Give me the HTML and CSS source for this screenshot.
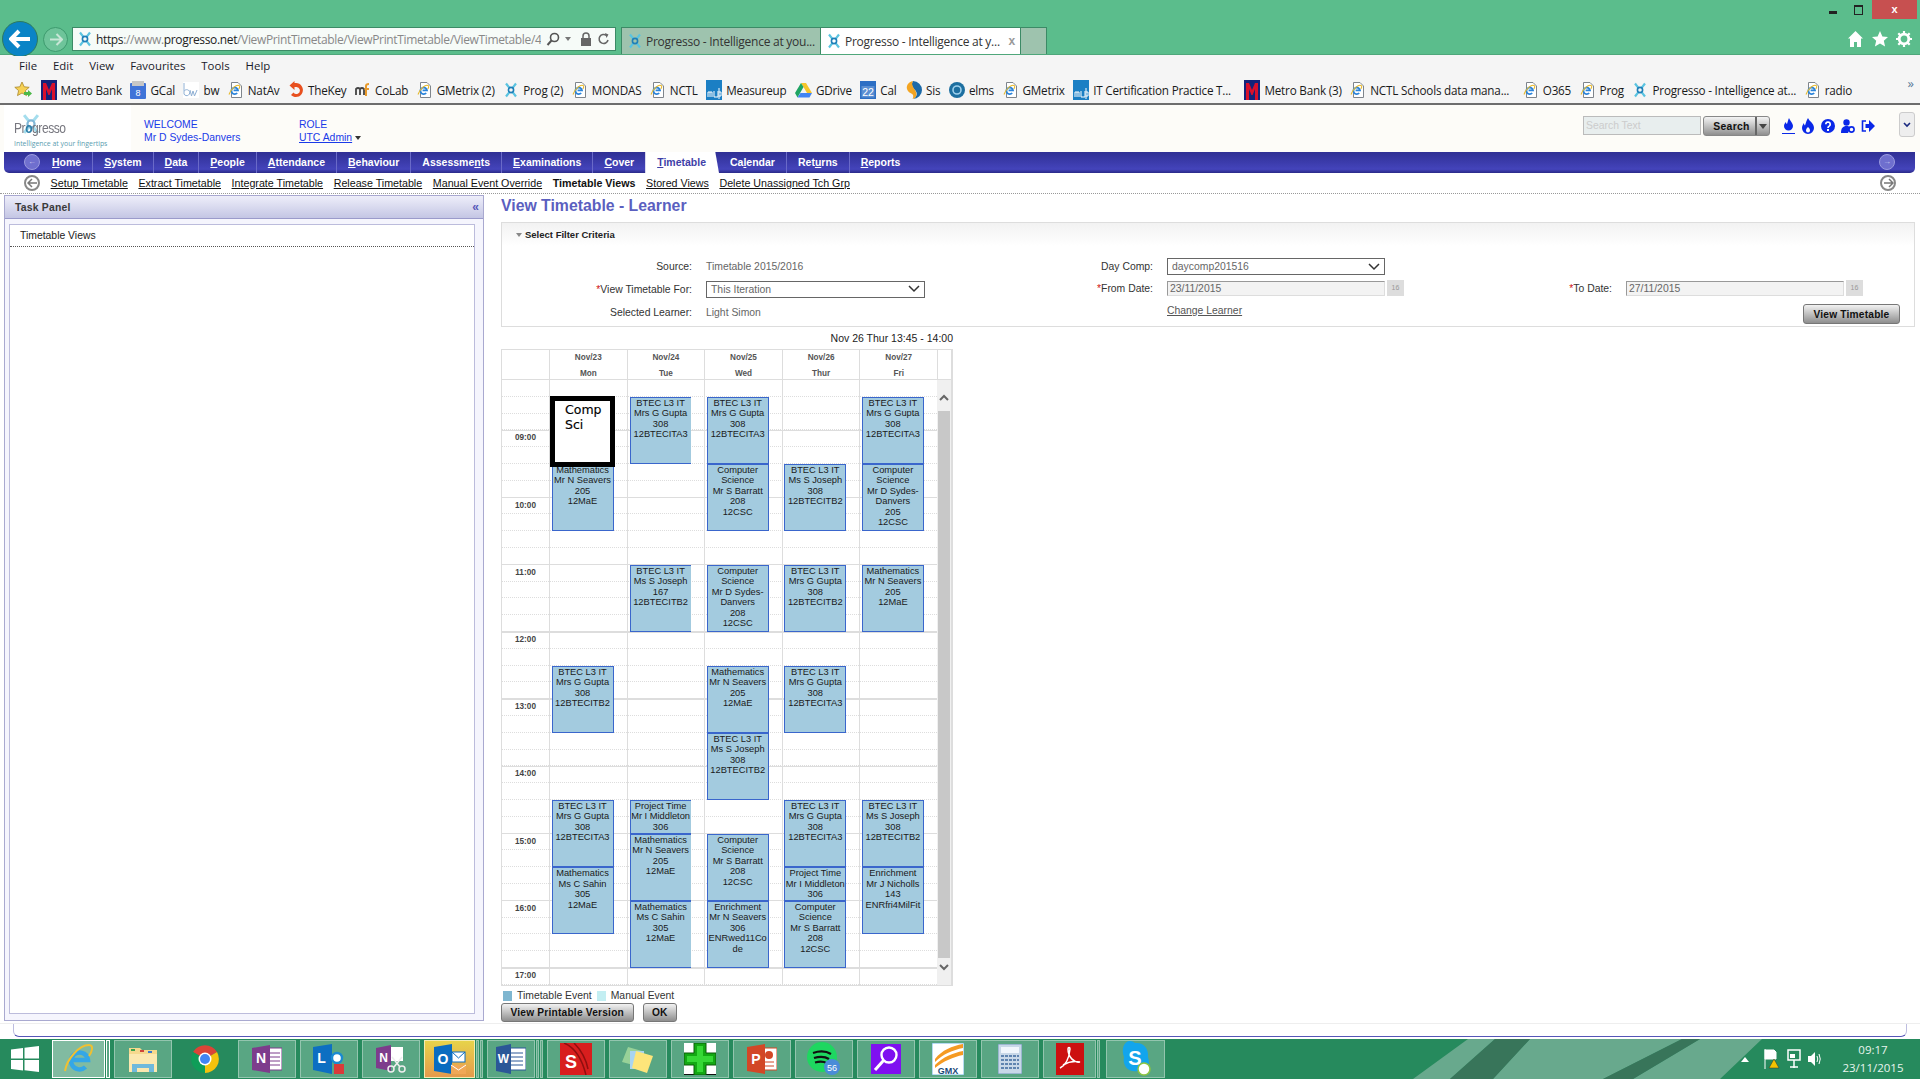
FILE: index.html
```html
<!DOCTYPE html>
<html lang="en">
<head>
  <meta charset="UTF-8" />
  <title>Progresso - Intelligence at your fingertips</title>
  <link rel="stylesheet" href="styles.css">
</head>
<body>

  <svg class="defs" width="0" height="0">
    <symbol id="prog" viewBox="0 0 16 16">
      <path d="M3 1.5l3.6 4.6M13 1.5L9.4 6.1M3 14.5l3.6-4.6M13 14.5L9.4 9.9" stroke="#5ac3e0" stroke-width="2.2" fill="none"/>
      <circle cx="8" cy="8" r="2.6" fill="none" stroke="#1f7fb8" stroke-width="1.6"/>
    </symbol>
    <symbol id="iedoc" viewBox="0 0 16 16">
      <path d="M3.5.5h6.5l3.5 3.5v11.5h-10z" fill="#fff" stroke="#7f858c"/>
      <path d="M8 9h4.4a3.3 3.3 0 1 0-.8 2.6" transform="translate(-2.4 -.6)" fill="none" stroke="#2b84da" stroke-width="1.8"/>
      <path d="M1 12.5C3.5 6 8.5 2.5 11 3.5c1.2.5.8 2-.2 3.5" fill="none" stroke="#e8b92c" stroke-width="1.1"/>
    </symbol>
    <symbol id="metro" viewBox="0 0 16 20">
      <rect width="16" height="20" fill="#14237a"/>
      <path d="M2 20V3h3l3 7 3-7h3v17h-3V9l-2.4 6H7.4L5 9v11z" fill="#d8102c"/>
    </symbol>
    <symbol id="mup" viewBox="0 0 16 20">
      <rect width="16" height="20" fill="#1b7fc4"/>
      <path d="M2 17v-5h4v5M4 12v5M8 11v6h4v-6M13 8v11M13 12h2v4h-2" stroke="#fff" stroke-width="1" fill="none"/>
    </symbol>
  </svg>

  <div class="titlebar">
    <div class="win-controls">
      <span class="win-min"></span>
      <span class="win-restore"></span>
      <span class="win-close">x</span>
    </div>
  </div>

  <div class="addressrow">
    <div class="back-btn">
      <svg width="22" height="20" viewBox="0 0 22 20"><path d="M10 2L2 10l8 8M3 10h18" stroke="#fff" stroke-width="4" fill="none"/></svg>
    </div>
    <div class="forward-btn">
      <svg width="14" height="13" viewBox="0 0 14 13"><path d="M7.5 1l5.5 5.500-5.500 5.500M12 6.500H1" stroke="#c8e6d6" stroke-width="2" fill="none"/></svg>
    </div>
    <div class="address">
      <svg class="fav-ic" width="16" height="16"><use href="#prog"/></svg>
      <span class="url"><b>https</b>://www.<b>progresso.net</b>/ViewPrintTimetable/ViewPrintTimetable/ViewTimetable/4</span>
      <svg class="addr-ic" width="14" height="14" viewBox="0 0 14 14"><circle cx="8.5" cy="5.5" r="4" fill="none" stroke="#555" stroke-width="1.6"/><path d="M5.5 8.5L1.5 13" stroke="#555" stroke-width="2"/></svg>
      <span class="addr-caret"></span>
      <svg class="addr-ic" width="12" height="14" viewBox="0 0 12 14"><rect x="1" y="6" width="10" height="8" fill="#666"/><path d="M3 6V4a3 3 0 0 1 6 0v2" fill="none" stroke="#666" stroke-width="1.5"/></svg>
      <svg class="addr-ic" width="13" height="14" viewBox="0 0 13 14"><path d="M11 8a4.5 4.5 0 1 1-1.500-4.500" fill="none" stroke="#666" stroke-width="1.6"/><path d="M8 1l3.5 1.5L9.5 6z" fill="#666"/></svg>
    </div>
    <div class="tab tab-off"><svg class="fav-ic" width="16" height="16"><use href="#prog"/></svg><span>Progresso - Intelligence at you...</span></div>
    <div class="tab tab-on"><svg class="fav-ic" width="16" height="16"><use href="#prog"/></svg><span>Progresso - Intelligence at y...</span><i>x</i></div>
    <div class="tab-new"></div>
    <div class="chrome-right">
      <svg width="15" height="16" viewBox="0 0 15 16"><path d="M7.5 0L0 7.5h2V16h4v-5h3v5h4V7.5h2z" fill="#fff"/></svg>
      <svg width="16" height="16" viewBox="0 0 16 16"><path d="M8 0l2.4 5.4 5.6.5-4.200 3.800 1.300 5.800L8 12.500 2.900 15.500l1.300-5.800L0 5.900l5.600-.5z" fill="#fff"/></svg>
      <svg width="16" height="16" viewBox="0 0 16 16"><circle cx="8" cy="8" r="4.8" fill="none" stroke="#fff" stroke-width="2.8"/><path d="M8 0v3M8 13v3M0 8h3M13 8h3M2.3 2.3l2.100 2.100M11.600 11.600l2.100 2.100M2.300 13.700l2.100-2.100M11.600 4.400l2.100-2.100" stroke="#fff" stroke-width="2.2"/></svg>
    </div>
  </div>

  <div class="menubar">
    <span>File</span><span>Edit</span><span>View</span><span>Favourites</span><span>Tools</span><span>Help</span>
  </div>

  <div class="favbar">
    <svg class="fav-star" width="18" height="17" viewBox="0 0 18 17"><path d="M8 1l2.200 4.800 5 .5-3.800 3.300 1.100 5-4.500-2.600-4.500 2.600 1.100-5L.8 6.300l5-.5z" fill="#f6d155" stroke="#a8862a" stroke-width=".8"/><path d="M10 11h4V9l4 3.500-4 3.500v-2h-4z" fill="#4cb848"/></svg>
    <a class="fav"><svg width="16" height="20"><use href="#metro"/></svg>Metro Bank</a>
    <a class="fav"><svg width="16" height="18" viewBox="0 0 16 18"><rect y="2" width="16" height="16" rx="1" fill="#3f73d8"/><rect x="2" width="12" height="5" fill="#c6c6c6"/><text x="8" y="14.500" font-size="9" fill="#fff" text-anchor="middle" font-family="Liberation Sans">8</text></svg>GCal</a>
    <a class="fav"><svg width="16" height="16" viewBox="0 0 16 16"><rect width="16" height="16" fill="#fff"/><path d="M1 1v11a3 3 0 1 0 .2-3M7 8l1.500 6 1.500-5 1.500 5L14 8" stroke="#8fb0d4" fill="none"/></svg>bw</a>
    <a class="fav"><svg width="16" height="16"><use href="#iedoc"/></svg>NatAv</a>
    <a class="fav"><svg width="16" height="18" viewBox="0 0 16 18"><path d="M8 2a7 7 0 1 1-5 12l2.500-2.500A3.500 3.500 0 1 0 8 6H6.500V9L1.500 4.500 6.500 0v2z" fill="#e8501f"/></svg>TheKey</a>
    <a class="fav"><svg width="16" height="16" viewBox="0 0 16 16"><path d="M1 13V7q2-2 4 0v6M5 7q2-2 4 0v6" fill="none" stroke="#444" stroke-width="1.800"/><path d="M11 14V4q0-2 3-2M9.500 7H14" fill="none" stroke="#e89a2c" stroke-width="2"/></svg>CoLab</a>
    <a class="fav"><svg width="16" height="16"><use href="#iedoc"/></svg>GMetrix (2)</a>
    <a class="fav"><svg width="16" height="18"><use href="#prog"/></svg>Prog (2)</a>
    <a class="fav"><svg width="16" height="16"><use href="#iedoc"/></svg>MONDAS</a>
    <a class="fav"><svg width="16" height="16"><use href="#iedoc"/></svg>NCTL</a>
    <a class="fav"><svg width="16" height="20"><use href="#mup"/></svg>Measureup</a>
    <a class="fav"><svg width="17" height="16" viewBox="0 0 17 16"><path d="M6 1h5l6 10h-5z" fill="#f7c52a"/><path d="M6 1L0 11l2.500 4.500L8.500 5z" fill="#1fa463"/><path d="M5.500 11H17l-2.500 4.500h-12z" fill="#4285f4"/></svg>GDrive</a>
    <a class="fav"><svg width="16" height="18" viewBox="0 0 16 18"><rect width="16" height="18" fill="#2d6fc4"/><rect x="1.500" y="5" width="13" height="11.500" fill="#e8f0fa" opacity=".25"/><text x="8" y="15" font-size="10.500" fill="#fff" text-anchor="middle" font-family="Liberation Sans">22</text></svg>Cal</a>
    <a class="fav"><svg width="17" height="18" viewBox="0 0 17 18"><path d="M8 0a9 9 0 0 1 0 18c4-2 5-6 2-9S6 3 8 0z" fill="#1d6aa8"/><path d="M8 0C3 1 1 5 2 8c1 4 5 4 6 6 .6 1.500 0 3-.5 4 5-1.500 4.500-6 2.500-9S6 3 8 0z" fill="#f4a522"/></svg>Sis</a>
    <a class="fav"><svg width="16" height="16" viewBox="0 0 16 16"><circle cx="8" cy="8" r="8" fill="#1d6fa0"/><circle cx="8" cy="8" r="4" fill="none" stroke="#9ed0ec" stroke-width="1.600"/></svg>elms</a>
    <a class="fav"><svg width="16" height="16"><use href="#iedoc"/></svg>GMetrix</a>
    <a class="fav"><svg width="16" height="20"><use href="#mup"/></svg>IT Certification Practice T...</a>
    <a class="fav fav-wide"><svg width="16" height="20"><use href="#metro"/></svg>Metro Bank (3)</a>
    <a class="fav"><svg width="16" height="16"><use href="#iedoc"/></svg>NCTL Schools data mana...</a>
    <a class="fav fav-wide"><svg width="16" height="16"><use href="#iedoc"/></svg>O365</a>
    <a class="fav"><svg width="16" height="16"><use href="#iedoc"/></svg>Prog</a>
    <a class="fav"><svg width="16" height="18"><use href="#prog"/></svg>Progresso - Intelligence at...</a>
    <a class="fav"><svg width="16" height="16"><use href="#iedoc"/></svg>radio</a>
    <span class="fav-more">»</span>
  </div>

  <div class="page-header">
    <div class="logo">
      <svg class="logo-star" width="22" height="26"><use href="#prog"/></svg>
      <div class="logo-name">Pr<span class="logo-hub">o</span>gresso</div>
      <div class="logo-tag">Intelligence at your fingertips</div>
    </div>
    <div class="welcome">WELCOME<br>Mr D Sydes-Danvers</div>
    <div class="role">ROLE<br><u>UTC Admin</u><span class="role-caret"></span></div>
    <div class="header-tools">
      <input class="search-input" type="text" placeholder="Search Text" />
      <div class="search-btn"><span>Search</span><i></i></div>
      <div class="tool-icons">
        <svg width="13" height="16" viewBox="0 0 13 16"><path d="M7 0c1 3 4 5 4 8a4.500 4.500 0 0 1-9 0c0-2 1-3 2-4 0 1 .5 2 1 2 .8-2 1-4 2-6z" fill="#0a28e8"/><path d="M0 15.500h13" stroke="#0a28e8"/></svg>
        <svg width="14" height="16" viewBox="0 0 14 16"><path d="M7 0c1 3 6 5 6 10a6 6 0 0 1-12 0c0-2 1-4 2-5 0 1 .3 2 1 2.500C5 5 5.500 2 7 0zm0 9c-1 1-2 2-2 3.500a2 2 0 0 0 4 0C9 11 8 10 7 9z" fill="#0a28e8"/></svg>
        <svg width="14" height="14" viewBox="0 0 14 14"><circle cx="7" cy="7" r="7" fill="#0a28e8"/><path d="M4.800 5.200a2.200 2.200 0 1 1 3.400 1.900c-.8.500-1.200 1-1.200 1.800" fill="none" stroke="#fff" stroke-width="1.700"/><rect x="6" y="10" width="2" height="2" fill="#fff"/></svg>
        <svg width="14" height="14" viewBox="0 0 14 14"><circle cx="5.500" cy="3.500" r="3.200" fill="#0a28e8"/><path d="M0 14c0-5 2-7 5.500-7 2 0 3 .5 4 1.500L7 14z" fill="#0a28e8"/><circle cx="10.500" cy="10.500" r="2.600" fill="none" stroke="#0a28e8" stroke-width="1.600"/></svg>
        <svg width="14" height="12" viewBox="0 0 14 12"><path d="M5 1H1.500v10H5" fill="none" stroke="#0a28e8" stroke-width="1.600"/><path d="M4.500 4H8V0l6 6-6 6V8H4.500z" fill="#0a28e8"/></svg>
      </div>
      <div class="collapse-btn"><svg width="8" height="6" viewBox="0 0 8 6"><path d="M1 1l3 3 3-3" stroke="#1a2a80" stroke-width="1.600" fill="none"/></svg></div>
    </div>
  </div>

  <div class="nav">
    <span class="nav-round"><em>←</em></span>
    <a><u>H</u>ome</a><a><u>S</u>ystem</a><a><u>D</u>ata</a><a><u>P</u>eople</a><a><u>A</u>ttendance</a><a><u>B</u>ehaviour</a><a>Assessme<u>n</u>ts</a><a><u>E</u>xaminations</a><a><u>C</u>over</a><a class="nav-on"><u>T</u>imetable</a><a>Ca<u>l</u>endar</a><a>Ret<u>u</u>rns</a><a><u>R</u>eports</a>
    <span class="nav-round nav-round-right"><em>→</em></span>
  </div>

  <div class="subnav">
    <span class="sub-round">
      <svg width="11" height="10" viewBox="0 0 11 10"><path d="M5 1L1 5l4 4M1.500 5H10" stroke="#777" stroke-width="1.500" fill="none"/></svg>
    </span>
    <a>Setup Timetable</a><a>Extract Timetable</a><a>Integrate Timetable</a><a>Release Timetable</a><a>Manual Event Override</a><a class="sub-on">Timetable Views</a><a>Stored Views</a><a>Delete Unassigned Tch Grp</a>
    <span class="sub-round sub-round-right">
      <svg width="11" height="10" viewBox="0 0 11 10"><path d="M6 1l4 4-4 4M9.500 5H1" stroke="#777" stroke-width="1.500" fill="none"/></svg>
    </span>
  </div>

  <div class="content">
    <div class="task-panel">
      <div class="task-title"><span>Task Panel</span><i>«</i></div>
      <div class="task-body">
        <div class="task-item">Timetable Views</div>
      </div>
    </div>

    <div class="main">
      <h1 class="page-title">View Timetable - Learner</h1>

      <div class="filter">
        <div class="filter-head"><span class="filter-arrow"></span>Select Filter Criteria</div>
        <div class="filter-grid">
          <label>Source:</label>
          <div class="val">Timetable 2015/2016</div>
          <label>Day Comp:</label>
          <div class="sel sel-short">daycomp201516<svg width="12" height="8" viewBox="0 0 12 8"><path d="M1 1l5 5 5-5" stroke="#333" stroke-width="1.500" fill="none"/></svg></div>
          <span></span><span></span>

          <label><b>*</b>View Timetable For:</label>
          <div class="sel">This Iteration<svg width="12" height="8" viewBox="0 0 12 8"><path d="M1 1l5 5 5-5" stroke="#333" stroke-width="1.500" fill="none"/></svg></div>
          <label class="date-label"><b>*</b>From Date:</label>
          <div class="date-field"><div class="date-val">23/11/2015</div><span class="cal-ic">16</span></div>
          <label class="date-label"><b>*</b>To Date:</label>
          <div class="date-field"><div class="date-val">27/11/2015</div><span class="cal-ic">16</span></div>

          <label>Selected Learner:</label>
          <div class="val">Light Simon</div>
          <span></span>
          <a class="change-link">Change Learner</a>
          <span></span>
          <div class="view-wrap"><button class="btn">View Timetable</button></div>
        </div>
      </div>

      <div class="tt-caption">Nov 26 Thur 13:45 - 14:00</div>

      <div class="timetable">
        <div class="tt-head">
          <div></div>
          <div>Nov/23<br>Mon</div>
          <div>Nov/24<br>Tue</div>
          <div>Nov/25<br>Wed</div>
          <div>Nov/26<br>Thur</div>
          <div>Nov/27<br>Fri</div>
          <div></div>
        </div>
        <div class="tt-body">
          <div class="tt-dots"></div>
          <div class="tt-line mon"></div><div class="tt-line tue"></div><div class="tt-line wed"></div><div class="tt-line thu"></div><div class="tt-line fri"></div>

          <div class="tt-time" style="grid-row:4">09:00</div>
          <div class="tt-time" style="grid-row:8">10:00</div>
          <div class="tt-time" style="grid-row:12">11:00</div>
          <div class="tt-time" style="grid-row:16">12:00</div>
          <div class="tt-time" style="grid-row:20">13:00</div>
          <div class="tt-time" style="grid-row:24">14:00</div>
          <div class="tt-time" style="grid-row:28">15:00</div>
          <div class="tt-time" style="grid-row:32">16:00</div>
          <div class="tt-time" style="grid-row:36">17:00</div>

          <div class="ev mon" style="grid-row:6/span 4">Mathematics<br>Mr N Seavers<br>205<br>12MaE</div>
          <div class="ev mon" style="grid-row:18/span 4">BTEC L3 IT<br>Mrs G Gupta<br>308<br>12BTECITB2</div>
          <div class="ev mon" style="grid-row:26/span 4">BTEC L3 IT<br>Mrs G Gupta<br>308<br>12BTECITA3</div>
          <div class="ev mon" style="grid-row:30/span 4">Mathematics<br>Ms C Sahin<br>305<br>12MaE</div>

          <div class="ev tue" style="grid-row:2/span 4">BTEC L3 IT<br>Mrs G Gupta<br>308<br>12BTECITA3</div>
          <div class="ev tue" style="grid-row:12/span 4">BTEC L3 IT<br>Ms S Joseph<br>167<br>12BTECITB2</div>
          <div class="ev tue" style="grid-row:26/span 2">Project Time<br>Mr I Middleton<br>306</div>
          <div class="ev tue" style="grid-row:28/span 4">Mathematics<br>Mr N Seavers<br>205<br>12MaE</div>
          <div class="ev tue" style="grid-row:32/span 4">Mathematics<br>Ms C Sahin<br>305<br>12MaE</div>

          <div class="ev wed" style="grid-row:2/span 4">BTEC L3 IT<br>Mrs G Gupta<br>308<br>12BTECITA3</div>
          <div class="ev wed" style="grid-row:6/span 4">Computer<br>Science<br>Mr S Barratt<br>208<br>12CSC</div>
          <div class="ev wed" style="grid-row:12/span 4">Computer<br>Science<br>Mr D Sydes-<br>Danvers<br>208<br>12CSC</div>
          <div class="ev wed" style="grid-row:18/span 4">Mathematics<br>Mr N Seavers<br>205<br>12MaE</div>
          <div class="ev wed" style="grid-row:22/span 4">BTEC L3 IT<br>Ms S Joseph<br>308<br>12BTECITB2</div>
          <div class="ev wed" style="grid-row:28/span 4">Computer<br>Science<br>Mr S Barratt<br>208<br>12CSC</div>
          <div class="ev wed" style="grid-row:32/span 4">Enrichment<br>Mr N Seavers<br>306<br>ENRwed11Co<br>de</div>

          <div class="ev thu" style="grid-row:6/span 4">BTEC L3 IT<br>Ms S Joseph<br>308<br>12BTECITB2</div>
          <div class="ev thu" style="grid-row:12/span 4">BTEC L3 IT<br>Mrs G Gupta<br>308<br>12BTECITB2</div>
          <div class="ev thu" style="grid-row:18/span 4">BTEC L3 IT<br>Mrs G Gupta<br>308<br>12BTECITA3</div>
          <div class="ev thu" style="grid-row:26/span 4">BTEC L3 IT<br>Mrs G Gupta<br>308<br>12BTECITA3</div>
          <div class="ev thu" style="grid-row:30/span 2">Project Time<br>Mr I Middleton<br>306</div>
          <div class="ev thu" style="grid-row:32/span 4">Computer<br>Science<br>Mr S Barratt<br>208<br>12CSC</div>

          <div class="ev fri" style="grid-row:2/span 4">BTEC L3 IT<br>Mrs G Gupta<br>308<br>12BTECITA3</div>
          <div class="ev fri" style="grid-row:6/span 4">Computer<br>Science<br>Mr D Sydes-<br>Danvers<br>205<br>12CSC</div>
          <div class="ev fri" style="grid-row:12/span 4">Mathematics<br>Mr N Seavers<br>205<br>12MaE</div>
          <div class="ev fri" style="grid-row:26/span 4">BTEC L3 IT<br>Ms S Joseph<br>308<br>12BTECITB2</div>
          <div class="ev fri" style="grid-row:30/span 4">Enrichment<br>Mr J Nicholls<br>143<br>ENRfri4MilFit</div>

          <div class="tt-scroll">
            <div class="tt-scroll-btn"><svg width="10" height="7" viewBox="0 0 10 7"><path d="M1 6l4-4 4 4" stroke="#666" stroke-width="2" fill="none"/></svg></div>
            <div class="tt-scroll-thumb"></div>
            <div class="tt-scroll-btn tt-scroll-down"><svg width="10" height="7" viewBox="0 0 10 7"><path d="M1 1l4 4 4-4" stroke="#666" stroke-width="2" fill="none"/></svg></div>
          </div>

          <div class="note">Comp<br>Sci</div>
        </div>
      </div>

      <div class="legend">
        <i class="sw-tt"></i><span>Timetable Event</span><i class="sw-man"></i><span>Manual Event</span>
      </div>
      <div class="main-btns">
        <button class="btn">View Printable Version</button>
        <button class="btn">OK</button>
      </div>
    </div>
  </div>

  <div class="page-foot"><div></div></div>

  <div class="taskbar">
    <svg class="wallpaper" width="1920" height="40" viewBox="0 0 1920 40">
      <path d="M1413 40L1468 0H1495L1450 40zM1493 40L1530 0H1682L1603 40zM1633 40L1700 0H1762L1720 40z" fill="#7fb39e" opacity=".75"/>
      <path d="M1450 40L1495 0H1530L1493 40zM1603 40L1682 0H1700L1633 40z" fill="#3d6f5a" opacity=".8"/>
    </svg>
    <div class="start">
      <svg width="28" height="26" viewBox="0 0 28 26"><path d="M0 3.500L12 2v10.500H0zM13.500 1.800L28 0v12.500H13.500zM0 14h12v10.500L0 23zM13.500 14H28v12l-14.500-1.800z" fill="#fff"/></svg>
    </div>
    <div class="tb tb-open tb-s"><svg width="32" height="32" viewBox="0 0 32 32"><path d="M9 17h16a8.500 8.500 0 1 0-2.500 7" fill="none" stroke="#35a7e6" stroke-width="4.500"/><path d="M2 28C4 16 16 2 26 2c5 0 3 7 0 11" fill="none" stroke="#f0c030" stroke-width="2"/></svg></div>
    <div class="tb-sliver tb-sliver-w"></div>
    <div class="tb"><svg width="32" height="28" viewBox="0 0 32 28"><path d="M2 3h11l2 2h15v22H2z" fill="#f5d98e"/><path d="M2 9h28v18H2z" fill="#fbe8b0"/><path d="M5 27v-8h22v8h-5v-4H10v4z" fill="#6fb9dc"/><rect x="4" y="4" width="4" height="2" fill="#3aa54b"/><rect x="13" y="5" width="4" height="2" fill="#d0453a"/><rect x="21" y="6" width="4" height="2" fill="#3a7ad0"/></svg></div>
    <div class="tb tb-plain"><svg width="30" height="30" viewBox="0 0 30 30"><path d="M15 15L3 8a14 14 0 0 1 24 0z" fill="#db4437"/><path d="M15 15l12-7a14 14 0 0 1-12 21z" fill="#f4c20d"/><path d="M15 15v14A14 14 0 0 1 3 8z" fill="#0f9d58"/><circle cx="15" cy="15" r="6.500" fill="#fff"/><circle cx="15" cy="15" r="5" fill="#4285f4"/></svg></div>
    <div class="tb"><svg width="30" height="28" viewBox="0 0 30 28"><rect x="14" y="3" width="16" height="22" fill="#fff" stroke="#7d3c8c"/><path d="M17 8h11M17 12h11M17 16h11M17 20h11" stroke="#7d3c8c"/><path d="M0 3l18-3v28L0 25z" fill="#7d3c8c"/><text x="9" y="18" font-size="14" font-weight="700" fill="#fff" text-anchor="middle" font-family="Liberation Sans">N</text></svg></div>
    <div class="tb"><svg width="32" height="32" viewBox="0 0 32 32"><path d="M0 4l19-3v30L0 27z" fill="#0d6fc2"/><text x="8.500" y="20" font-size="14" font-weight="700" fill="#fff" text-anchor="middle" font-family="Liberation Sans">L</text><circle cx="24" cy="15" r="5" fill="#fff" stroke="#1a8ad0" stroke-width="2.400"/><rect x="21" y="21" width="10" height="10" fill="#d93a3a"/></svg></div>
    <div class="tb"><svg width="30" height="28" viewBox="0 0 30 28"><rect x="14" y="2" width="13" height="14" fill="#fff"/><path d="M0 3l15-3v26L0 23z" fill="#7d3c8c"/><text x="7.500" y="17" font-size="12" font-weight="700" fill="#fff" text-anchor="middle" font-family="Liberation Sans">N</text><path d="M16 12l8 10M26 12l-8 10" stroke="#eee" stroke-width="1.600"/><circle cx="15" cy="24" r="3" fill="none" stroke="#eee" stroke-width="1.500"/><circle cx="26" cy="24" r="3" fill="none" stroke="#eee" stroke-width="1.500"/></svg></div>
    <div class="tb tb-outlook"><svg width="32" height="30" viewBox="0 0 32 30"><path d="M0 3l18-3v30L0 27z" fill="#0a6cc0"/><text x="9" y="20" font-size="14" font-weight="700" fill="#fff" text-anchor="middle" font-family="Liberation Sans">O</text><rect x="18" y="8" width="13" height="10" fill="#fff" stroke="#0a6cc0"/><path d="M18 8l6.500 6L31 8" stroke="#0a6cc0" fill="none"/><path d="M17 21h15v9H17z" fill="#f0a857"/><path d="M17 21l7.500 5 7.500-5" stroke="#fff" fill="none"/></svg></div>
    <div class="tb-sliver"></div><div class="tb-sliver"></div>
    <div class="tb tb-word"><svg width="30" height="30" viewBox="0 0 30 30"><rect x="12" y="4" width="18" height="22" fill="#fff" stroke="#2b5797"/><path d="M15 9h12M15 13h12M15 17h12M15 21h12" stroke="#2b5797"/><path d="M0 3l15-3v30L0 27z" fill="#2b5797"/><text x="7.500" y="19" font-size="12" font-weight="700" fill="#fff" text-anchor="middle" font-family="Liberation Sans">W</text></svg></div>
    <div class="tb-sliver"></div><div class="tb-sliver"></div>
    <div class="tb"><svg width="32" height="32" viewBox="0 0 32 32"><rect width="32" height="32" fill="#d81e1e"/><path d="M4 0c10 4 18 16 22 32M14 0c6 6 12 16 14 26" stroke="#8f0f0f" stroke-width="1.500" fill="none"/><text x="11" y="25" font-size="18" font-weight="700" fill="#fff" text-anchor="middle" font-family="Liberation Sans">S</text></svg></div>
    <div class="tb"><svg width="32" height="28" viewBox="0 0 32 28"><path d="M6 2l14 4-5 15L0 17z" fill="#9ed69a" opacity=".9"/><path d="M8 6h14v18H8z" fill="#a8d4f0"/><path d="M14 6l17 5-6 17-15-5z" fill="#fde57a"/></svg></div>
    <div class="tb"><svg width="32" height="32" viewBox="0 0 32 32"><rect width="32" height="32" fill="#fff"/><rect y="31" width="32" height="1" fill="#111"/><path d="M10 0h12v10h10v12H22v10H10V22H0V10h10z" fill="#13a813" stroke="#0b5c0b"/><path d="M13 3h6v10h10v6H19v10h-6V19H3v-6h10z" fill="#35d835"/></svg></div>
    <div class="tb"><svg width="30" height="30" viewBox="0 0 30 30"><rect x="14" y="4" width="16" height="22" fill="#fff" stroke="#d24726"/><path d="M18 18h9M18 22h9" stroke="#d24726"/><circle cx="22" cy="11" r="4" fill="#d24726"/><path d="M0 3l18-3v30L0 27z" fill="#d24726"/><text x="9" y="20" font-size="14" font-weight="700" fill="#fff" text-anchor="middle" font-family="Liberation Sans">P</text></svg></div>
    <div class="tb"><svg width="34" height="34" viewBox="0 0 34 34"><circle cx="15" cy="15" r="15" fill="#1ed760"/><path d="M6 11c6-2 13-2 18 1M7 16c5-1.500 11-1.500 15 1M8 20.500c4-1 9-1 12 .8" stroke="#111" stroke-width="2.200" fill="none"/><circle cx="25" cy="25" r="8" fill="#4a8cd8"/><text x="25" y="28.500" font-size="9" fill="#fff" text-anchor="middle" font-family="Liberation Sans">56</text></svg></div>
    <div class="tb"><svg width="30" height="30" viewBox="0 0 30 30"><rect width="30" height="30" fill="#7f10f0"/><circle cx="18" cy="11" r="7.500" fill="none" stroke="#fff" stroke-width="2.400"/><path d="M12.500 16.500L4 26" stroke="#fff" stroke-width="3"/></svg></div>
    <div class="tb"><svg width="32" height="32" viewBox="0 0 32 32"><rect width="32" height="32" fill="#fff" stroke="#6fb6e4"/><path d="M3 16C10 7 20 3 31 1v4C21 7 11 11 3 19zM3 22C11 14 21 10 31 8v4C21 14 12 18 3 25z" fill="#f59a23"/><text x="16" y="31" font-size="9" font-weight="700" fill="#1a4a7a" text-anchor="middle" font-family="Liberation Sans">GMX</text></svg></div>
    <div class="tb"><svg width="24" height="30" viewBox="0 0 24 30"><rect width="24" height="30" fill="#c8d8e8" stroke="#6f94b8"/><rect x="3" y="3" width="18" height="6" fill="#f0f6fc"/><path d="M3 12h18M3 16h18M3 20h18M3 24h18" stroke="#5f84b0" stroke-width="2" stroke-dasharray="3 1"/></svg></div>
    <div class="tb tb-s"><svg width="28" height="32" viewBox="0 0 28 32"><rect width="28" height="32" fill="#cc1010"/><path d="M4 25c6-3 9-9 10-19 0-2-2-2-2 0 0 8 6 14 12 13-5-1-12 0-17 3" fill="none" stroke="#fff" stroke-width="1.500"/></svg></div>
    <div class="tb-sliver"></div>
    <div class="tb tb-skype"><svg width="30" height="38" viewBox="0 0 30 38"><path d="M9 1a8 8 0 0 1 5 2c8-1 14 5 13 14 3 8-2 16-10 14C8 33 1 26 3 17 0 9 3 1 9 1z" fill="#12a5ec"/><text x="14" y="25" font-size="20" font-weight="700" fill="#fff" text-anchor="middle" font-family="Liberation Sans">S</text><circle cx="23" cy="29" r="6" fill="#fff" stroke="#8ec63f" stroke-width="1.500"/></svg></div>

    <div class="tray">
      <span class="tray-up"></span>
      <svg width="16" height="20" viewBox="0 0 16 20"><path d="M1 0v20M1 1h9l2 2v7H1z" fill="#fff" stroke="#fff"/><path d="M10 10l5 9H5z" fill="#f2c300" stroke="#333" stroke-width=".5"/></svg>
      <svg width="14" height="20" viewBox="0 0 14 20"><rect x="1" y="1" width="12" height="10" fill="none" stroke="#fff" stroke-width="1.500"/><path d="M7 11v8M3 18h8" stroke="#fff" stroke-width="1.500"/><rect x="3" y="5" width="5" height="4" fill="#fff"/></svg>
      <svg width="13" height="16" viewBox="0 0 13 16"><path d="M0 5h3l4-4v14l-4-4H0z" fill="#fff"/><path d="M9 5q1.500 3 0 6M11 3q2.500 5 0 10" stroke="#fff" fill="none"/></svg>
      <div class="clock">09:17<br>23/11/2015</div>
    </div>
  </div>

</body>
</html>
```

FILE: styles.css
```css
* { margin: 0; padding: 0; box-sizing: border-box; }

body {
  width: 1920px;
  height: 1080px;
  overflow: hidden;
  background: #fff;
  font-family: "Liberation Sans", Arial, sans-serif;
  font-size: 10.4px;
  color: #222;
}

.defs { position: absolute; }

svg { flex-shrink: 0; display: block; }

/* browser chrome */
.titlebar {
  height: 27px;
  background: #5bbd8c;
  display: flex;
  justify-content: flex-end;
}

.win-controls { display: flex; align-items: flex-start; }

.win-min {
  width: 8px;
  height: 3px;
  background: #222;
  margin: 11px 17px 0 0;
}

.win-restore {
  width: 9px;
  height: 10px;
  border: 1px solid #222;
  border-top-width: 2px;
  margin: 5px 9px 0 0;
}

.win-close {
  width: 45px;
  height: 19px;
  margin-right: 3px;
  background: #c75050;
  color: #fff;
  font: 700 11px/18px "Liberation Sans", sans-serif;
  text-align: center;
}

.addressrow {
  height: 28px;
  background: #5bbd8c;
  display: flex;
  align-items: flex-start;
  border-bottom: 1px solid #4fa77b;
}

.back-btn {
  width: 36px;
  height: 36px;
  margin: -6px 0 0 2px;
  border-radius: 50%;
  background: #0a84c6;
  border: 1px solid #2f7a5c;
  display: flex;
  align-items: center;
  justify-content: center;
  position: relative;
  z-index: 2;
  clip-path: inset(0 0 1px 0);
}

.forward-btn {
  width: 25px;
  height: 25px;
  margin-left: 5px;
  border-radius: 50%;
  border: 1px solid #3d9a6e;
  background: #6ec49a;
  display: flex;
  align-items: center;
  justify-content: center;
}

.address {
  width: 544px;
  height: 24px;
  margin-left: 4px;
  background: #f6fbf8;
  border: 1px solid #3c8a66;
  display: flex;
  align-items: center;
  padding: 0 5px 0 4px;
  gap: 5px;
  font: 12px "Open Sans", sans-serif;
  color: #888;
}

.url {
  flex: 1;
  margin-left: -2px;
  overflow: hidden;
  white-space: nowrap;
  letter-spacing: -0.35px;
}

.url b { font-weight: 400; color: #222; }

.addr-caret {
  border: 3px solid transparent;
  border-top: 4px solid #777;
  border-bottom: 0;
  margin-right: 4px;
}

.tab {
  width: 200px;
  height: 27px;
  display: flex;
  align-items: center;
  gap: 3px;
  padding: 0 5px;
  font: 12px "Open Sans", sans-serif;
  letter-spacing: -0.25px;
  white-space: nowrap;
  overflow: hidden;
  border: 1px solid #3c8a66;
  border-bottom: 0;
}

.tab-off { margin-left: 5px; background: #9ec3ae; color: #333; }

.tab-on { background: #fff; color: #333; border-left: 0; }

.tab-on span { flex: 1; overflow: hidden; }

.tab-on i { font: 700 12px "Liberation Sans", sans-serif; color: #999; }

.tab-new {
  width: 26px;
  height: 27px;
  background: #9ec3ae;
  border: 1px solid #3c8a66;
  border-bottom: 0;
  border-left: 0;
}

.chrome-right {
  margin-left: auto;
  padding: 4px 8px 0 0;
  display: flex;
  gap: 8.5px;
}

.menubar {
  height: 23px;
  background: #f5f5f5;
  display: flex;
  align-items: center;
  gap: 16px;
  padding: 0 0 2px 19px;
  font: 11.4px "Open Sans", sans-serif;
  color: #1a1a2a;
}

.favbar {
  height: 27px;
  background: #f5f5f5;
  border-bottom: 2px solid #6d6d6d;
  display: flex;
  align-items: center;
  padding: 0 0 2px 14px;
  gap: 8.5px;
  font: 11.7px "Open Sans", sans-serif;
  color: #1a1a1a;
  white-space: nowrap;
}

.fav { display: flex; align-items: center; gap: 4px; letter-spacing: -0.2px; }

.fav-wide { margin-left: 5px; }

.fav-more {
  margin: 0 6px 12px auto;
  color: #5a7a99;
  font-size: 13px;
  line-height: 13px;
}

/* application header */
.page-header {
  height: 47px;
  background: #fdfcf8;
  display: flex;
  padding-left: 4px;
}

.logo {
  width: 127px;
  background: #fff;
  padding: 13px 0 0 10px;
  position: relative;
}

.logo-star {
  position: absolute;
  left: 16px;
  top: 6px;
  opacity: .55;
}

.logo-name {
  font: 15.5px/20px "Liberation Sans", sans-serif;
  color: #77777f;
  letter-spacing: -0.6px;
  transform: scaleX(.78);
  transform-origin: left;
  position: relative;
}

.logo-hub { color: #2f7fa8; font-weight: 700; }

.logo-tag {
  font: 6.9px/10px "Open Sans", sans-serif;
  color: #5a9db0;
  margin-top: 1px;
  white-space: nowrap;
}

.welcome, .role {
  color: #1a3ae8;
  line-height: 13px;
  padding-top: 13px;
}

.welcome { width: 155px; margin-left: 13px; }

.role u { text-decoration-thickness: 1px; }

.role-caret {
  display: inline-block;
  margin-left: 3px;
  border: 3.5px solid transparent;
  border-top: 4px solid #333;
  border-bottom: 0;
  vertical-align: 1px;
}

.header-tools {
  margin-left: auto;
  padding: 11px 5px 0 0;
  display: flex;
  align-items: flex-start;
}

.search-input {
  width: 118px;
  height: 19px;
  background: #e8eeee;
  border: 1px solid #bbb;
  padding-left: 2px;
  font: 10.4px "Liberation Sans", sans-serif;
}

.search-input::placeholder { color: #ccc; }

.search-btn {
  width: 67px;
  height: 20px;
  margin-left: 2px;
  padding-left: 4px;
  border: 1px solid #888;
  border-radius: 3px;
  background: linear-gradient(to bottom, #f4f4f4, #8f8f8f);
  display: flex;
  align-items: center;
  font-weight: 700;
  color: #111;
  line-height: 21px;
}

.search-btn span {
  flex: 1;
  text-align: center;
  letter-spacing: .3px;
}

.search-btn i {
  width: 14px;
  height: 100%;
  border-left: 2px solid #666;
  position: relative;
}

.search-btn i::after {
  content: "";
  position: absolute;
  left: 2px;
  top: 7px;
  border: 4px solid transparent;
  border-top: 5px solid #444;
  border-bottom: 0;
}

.tool-icons {
  display: flex;
  align-items: center;
  gap: 6px;
  margin: 2px 0 0 12px;
  width: 112px;
}

.collapse-btn {
  width: 16px;
  height: 25px;
  margin: -4px 0 0 5px;
  background: #eee;
  border: 1px solid #ccc;
  border-radius: 3px;
  display: flex;
  align-items: center;
  justify-content: center;
}

/* main navigation */
.nav {
  height: 21px;
  margin: 0 5px 0 4px;
  background: linear-gradient(to bottom, #2f2f94, #4444bb 82%, #2a2a88);
  border-radius: 0 0 5px 5px;
  display: flex;
  align-items: stretch;
  padding-left: 20px;
  color: #fff;
  font-weight: 700;
  font-size: 10.5px;
  line-height: 21px;
}

.nav a {
  padding: 0 11px;
  border-left: 1px solid #6a6ac8;
  white-space: nowrap;
}

.nav a:first-of-type { border-left: 0; }

.nav u { text-decoration-thickness: 1px; }

.nav .nav-on {
  background: #fff;
  color: #3f3fa8;
  border-left: 0;
  padding: 0 13px 0 12px;
  clip-path: polygon(0 0, 95% 0, 100% 100%, 0 100%);
}

.nav-on + a { border-left: 0; }

.nav-round {
  width: 16px;
  height: 16px;
  margin: 2px 1px 0 0;
  border-radius: 50%;
  background: #6f6fce;
  border: 1px solid #9a9adf;
  display: flex;
  align-items: center;
  justify-content: center;
}

.nav-round em {
  font: 8px/8px "Liberation Sans", sans-serif;
  color: #c8c8f0;
}

.nav-round-right { margin: 2px 20px 0 auto; }

.subnav {
  height: 21px;
  display: flex;
  align-items: center;
  gap: 10.6px;
  padding: 0 24px 1px 24px;
  border-bottom: 1px dotted #999;
  font-size: 10.7px;
  color: #111;
}

.subnav a { text-decoration: underline; white-space: nowrap; }

.subnav .sub-on { text-decoration: none; font-weight: 700; }

.sub-round {
  width: 16px;
  height: 16px;
  border-radius: 50%;
  border: 2px solid #888;
  display: flex;
  align-items: center;
  justify-content: center;
}

.sub-round-right { margin-left: auto; }

/* page body */
.content {
  height: 830px;
  display: flex;
  padding: 1px 0 2px 4px;
  border-bottom: 1px solid #eee;
}

.task-panel {
  width: 480px;
  border: 1px solid #a9a9d0;
  background: #f5f5fd;
  display: flex;
  flex-direction: column;
}

.task-title {
  height: 23px;
  background: linear-gradient(to bottom, #eeeefa, #c4c6e4);
  border-bottom: 1px solid #9b9bcb;
  display: flex;
  align-items: center;
  justify-content: space-between;
  padding: 0 4px 0 10px;
  font-weight: 700;
  color: #3a3a3a;
  letter-spacing: .2px;
}

.task-title i { color: #5656b8; font-style: normal; font-size: 12px; }

.task-body {
  flex: 1;
  margin: 5px 8px 6px 4px;
  background: #fff;
  border: 1px solid #bcbcdc;
}

.task-item {
  height: 22px;
  line-height: 21px;
  padding-left: 10px;
  border-bottom: 1px dotted #555;
}

.main { flex: 1; padding: 0 5px 0 16px; }

.page-title {
  height: 21px;
  margin: 0 0 6px 1px;
  font-size: 15.8px;
  line-height: 22px;
  color: #5b5fc0;
}

.filter {
  height: 105px;
  margin-left: 1px;
  border: 1px solid #ddd;
}

.filter-head {
  height: 23px;
  background: linear-gradient(to bottom, #f2f2f2, #fff);
  padding: 6px 0 0 14px;
  font-size: 9.5px;
  font-weight: 700;
  color: #222;
  display: flex;
  align-items: flex-start;
  gap: 3px;
  line-height: 11px;
}

.filter-arrow {
  margin-top: 4px;
  border: 3px solid transparent;
  border-top: 4px solid #888;
  border-bottom: 0;
}

.filter-grid {
  display: grid;
  grid-template-columns: 190px 219px 214px 238px 193px 1fr;
  grid-template-rows: 23px 22px 24px;
  column-gap: 14px;
  margin-top: 9px;
  align-items: center;
}

.filter-grid label {
  text-align: right;
  color: #333;
}

.filter-grid label b { color: #d01010; font-weight: 400; }

.filter-grid .date-label { margin-bottom: 2px; }

.val { color: #666; }

.sel {
  height: 17px;
  border: 1px solid #666;
  padding: 0 4px;
  display: flex;
  align-items: center;
  justify-content: space-between;
  color: #666;
  background: #fff;
}

.sel-short { width: 218px; }

.date-field { display: flex; align-items: center; gap: 2px; margin-bottom: 2px; }

.date-val {
  width: 218px;
  height: 15px;
  line-height: 14px;
  padding-left: 2px;
  background: #f3f3f3;
  border: 1px solid #ddd;
  border-left-color: #999;
  border-top-color: #999;
  color: #666;
}

.cal-ic {
  width: 17px;
  height: 16px;
  background: #ddd;
  color: #999;
  font-size: 7px;
  line-height: 16px;
  text-align: center;
}

.change-link { color: #555; text-decoration: underline; margin-bottom: 4px; }

.view-wrap { text-align: right; padding-right: 14px; margin-top: 4px; }

.view-wrap .btn { padding: 0 9.5px; }

.btn {
  height: 20px;
  padding: 0 8.5px;
  border: 1px solid #777;
  border-radius: 3px;
  background: linear-gradient(to bottom, #f2f2f2, #8e8e8e);
  font: 700 10.2px "Liberation Sans", sans-serif;
  color: #111;
  letter-spacing: .2px;
}

.tt-caption {
  height: 22px;
  width: 452px;
  margin-left: 1px;
  text-align: right;
  font-size: 10.5px;
  line-height: 23px;
  color: #222;
}

/* timetable */
.timetable {
  width: 452px;
  margin-left: 1px;
  border: 1px solid #ddd;
  border-width: 1px 2px 0 1px;
}

.tt-head {
  height: 30px;
  display: grid;
  grid-template-columns: 47px repeat(5, 77.6px) 1fr;
  font-size: 8.2px;
  font-weight: 700;
  color: #555;
  text-align: center;
  line-height: 16px;
  border-bottom: 1px solid #ddd;
}

.tt-head > div { border-left: 1px solid #ddd; height: 29px; }

.tt-head > div:first-child { border-left: 0; }

.tt-body {
  display: grid;
  grid-template-columns: 47px repeat(5, 77.6px) 1fr;
  grid-template-rows: repeat(36, 16.8px);
  position: relative;
  isolation: isolate;
  border-bottom: 1px solid #ddd;
  background: repeating-linear-gradient(to bottom, transparent 0 49.6px, #ddd 49.6px 51px, transparent 51px 67.2px);
}

/* the mask makes a stacking context, keep it under the events */
.tt-dots {
  grid-area: 1 / 1 / -1 / -1;
  z-index: -1;
  background: repeating-linear-gradient(to bottom, transparent 0 15.8px, #ddd 15.8px 16.8px);
  -webkit-mask-image: repeating-linear-gradient(to right, #000 0 1px, transparent 1px 2px);
  mask-image: repeating-linear-gradient(to right, #000 0 1px, transparent 1px 2px);
}

.mon { grid-column: 2; }
.tue { grid-column: 3; }
.wed { grid-column: 4; }
.thu { grid-column: 5; }
.fri { grid-column: 6; }

.tt-line {
  grid-row: 1 / -1;
  border-left: 1px solid #ddd;
}

.tt-time {
  grid-column: 1;
  font-size: 8.2px;
  font-weight: 700;
  color: #444;
  text-align: center;
  line-height: 16.5px;
}

.ev {
  width: 62px;
  margin-left: 2.5px;
  overflow: hidden;
  background: #a3cbdf;
  border: 1px solid #3a66cc;
  color: #1a1a1a;
  font-size: 9.3px;
  line-height: 10.5px;
  text-align: center;
}

.ev.tue { border-right: 0; width: 61px; margin-left: 3px; }

.tt-scroll {
  grid-column: 7;
  grid-row: 1 / -1;
  display: flex;
  flex-direction: column;
  background: #f0f0f0;
}

.tt-scroll-btn {
  height: 31px;
  display: flex;
  align-items: center;
  justify-content: center;
  padding-top: 4px;
}

.tt-scroll-thumb { flex: 1; background: #c8c8c8; margin: 0 1px; }

.tt-scroll-down { height: 27px; padding: 0 0 7px; }

.note {
  position: absolute;
  left: 48px;
  top: 16px;
  width: 65px;
  height: 71px;
  background: #fff;
  border: 5px solid #000;
  padding: 2px 0 0 10px;
  font: 12.5px/14.5px "DejaVu Sans", sans-serif;
  -webkit-text-stroke: .15px #000;
  color: #000;
}

.legend {
  height: 17px;
  margin-left: 3px;
  padding-top: 3px;
  display: flex;
  align-items: center;
  color: #333;
}

.legend i { width: 9px; height: 10px; margin-right: 5px; }

.sw-tt { background: #7fb6d0; }

.sw-man { background: #c3eef2; margin-left: 5px; }

.main-btns { display: flex; gap: 9px; margin-left: 1px; }

.main-btns .btn { height: 19px; }

.page-foot { height: 15px; padding: 0 13px; }

.page-foot div {
  height: 13px;
  border: 1px solid #bdbde0;
  border-top: 0;
  border-bottom: 1px solid #5656b8;
  border-radius: 0 0 6px 6px;
}

/* windows taskbar */
.taskbar {
  height: 40px;
  background: #268a5d;
  display: flex;
  align-items: center;
  gap: 4px;
  position: relative;
  padding-left: 52px;
}

.wallpaper { position: absolute; left: 0; top: 0; }

.start { position: absolute; left: 11px; top: 7px; }

.tb {
  width: 58px;
  height: 38px;
  background: rgba(255, 255, 255, 0.24);
  border: 1px solid rgba(255, 255, 255, 0.35);
  display: flex;
  align-items: center;
  justify-content: center;
  position: relative;
  overflow: hidden;
}

.tb-s { width: 53px; }

.tb-word { width: 48px; }

.tb-open { background: rgba(255, 255, 255, 0.42); border-color: #fff; }

.tb-plain { background: none; border-color: transparent; }

.tb-outlook {
  background: linear-gradient(to bottom, #e7d34a, #e59a4c);
  border-color: #f5ecb0;
  width: 51px;
}

.tb-skype { width: 59px; margin-left: 2px; }

.tb-sliver {
  width: 3px;
  height: 38px;
  margin-left: -3px;
  background: rgba(255, 255, 255, 0.24);
  border: 1px solid rgba(255, 255, 255, 0.35);
  position: relative;
}

.tb-sliver-w { border-color: #fff; width: 4px; }

.tray {
  margin-left: auto;
  display: flex;
  align-items: center;
  gap: 7px;
  position: relative;
  color: #e8f5ee;
  padding-right: 12px;
}

.tray-up {
  border: 4px solid transparent;
  border-bottom: 5px solid #fff;
  border-top: 0;
  margin-right: 8px;
}

.clock {
  width: 70px;
  margin-left: 10px;
  text-align: center;
  font: 11.5px/18px "Open Sans", sans-serif;
}
```
